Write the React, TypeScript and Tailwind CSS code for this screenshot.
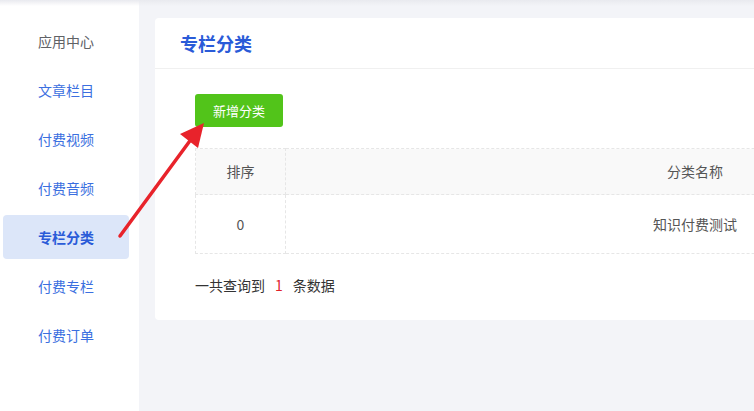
import React from 'react'

const navItems = [
  { label: '应用中心', muted: true },
  { label: '文章栏目' },
  { label: '付费视频' },
  { label: '付费音频' },
  { label: '专栏分类', active: true },
  { label: '付费专栏' },
  { label: '付费订单' },
]

export default function App() {
  return (
    <div
      className="relative w-[754px] h-[411px] overflow-hidden bg-[#f3f4f8] flex"
      style={{ fontFamily: '"Noto Sans CJK SC", "Noto Sans", sans-serif' }}
    >
      {/* top shadow */}
      <div className="absolute top-0 left-0 right-0 h-[6px] bg-gradient-to-b from-[#e9eaef] to-transparent z-10" />

      {/* Sidebar */}
      <aside className="w-[139px] shrink-0 bg-white pt-[19px]">
        <ul className="flex flex-col gap-[5px] pl-[3px] pr-[10px]">
          {navItems.map((item) => (
            <li
              key={item.label}
              className={`h-[44px] flex items-center pl-[35px] rounded text-[14px] ${
                item.active
                  ? 'bg-[#dce6f9] text-[#2a5bd8] font-bold'
                  : item.muted
                  ? 'text-[#606266]'
                  : 'text-[#3b6fe0]'
              }`}
            >
              {item.label}
            </li>
          ))}
        </ul>
      </aside>

      {/* Main */}
      <main className="flex-1 pl-[16px] pt-[18px]">
        <div className="w-[1000px] h-[302px] bg-white rounded">
          <div className="h-[51px] flex items-center pl-[25px] border-b border-[#f0f0f0]">
            <h1 className="text-[18px] font-bold text-[#2a5bd8]">专栏分类</h1>
          </div>
          <div className="pl-[40px] pt-[25px]">
            <button className="w-[88px] h-[33px] bg-[#52c41a] text-white text-[13px] rounded-[3px]">
              新增分类
            </button>
            <table className="mt-[21px] w-[910px] border-collapse text-[14px] text-[#555]">
              <thead>
                <tr className="bg-[#f9f9f9] h-[46px]">
                  <th className="w-[90px] font-normal border border-dashed border-[#e6e6e6]">排序</th>
                  <th className="font-normal border border-dashed border-[#e6e6e6]">分类名称</th>
                </tr>
              </thead>
              <tbody>
                <tr className="h-[59px]">
                  <td className="text-center border border-dashed border-[#e6e6e6]">0</td>
                  <td className="text-center border border-dashed border-[#e6e6e6]">知识付费测试</td>
                </tr>
              </tbody>
            </table>
            <p className="mt-[21px] text-[14px] text-[#333]">
              一共查询到<span className="text-[#e0222a] mx-[10px]">1</span>条数据
            </p>
          </div>
        </div>
      </main>

      {/* annotation arrow */}
      <svg className="absolute left-0 top-0 z-20" width="754" height="411" viewBox="0 0 754 411">
        <line x1="120" y1="236" x2="192" y2="138" stroke="#e8232b" strokeWidth="3.5" strokeLinecap="round" />
        <polygon points="204,123 198,148 180,134" fill="#e8232b" />
      </svg>
    </div>
  )
}
